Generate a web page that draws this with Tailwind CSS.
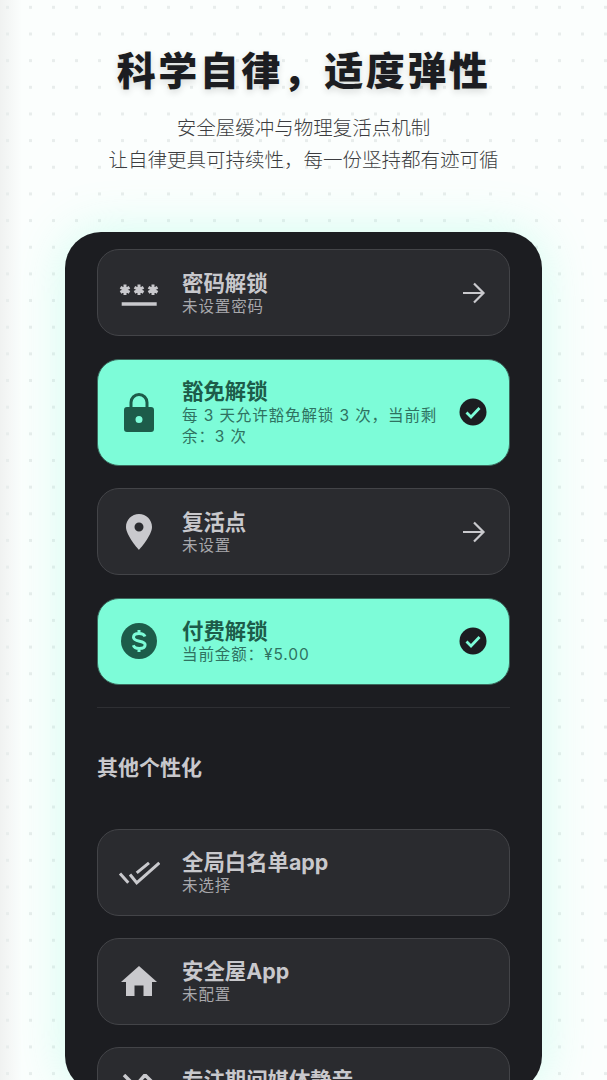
<!DOCTYPE html>
<html lang="zh-CN">
<head>
    <meta charset="UTF-8">
    <meta name="viewport" content="width=device-width, initial-scale=1.0">
    <title>科学自律，适度弹性</title>
    <script src="https://cdn.jsdelivr.net/npm/@tailwindcss/browser@4"></script>
</head>
<body class="h-[1080px] overflow-hidden bg-[linear-gradient(90deg,#f0f2f1,#fbfefd_22px)] font-['Inter','Noto_Sans_CJK_SC',sans-serif]">
    <div class="h-[1080px] overflow-hidden bg-[radial-gradient(circle,#e8edec_1.5px,transparent_2px)] bg-[size:23px_26.67px] bg-[position:-4px_-6px]">
        <header class="pt-[43px] text-center">
            <h1 class="h-[55px] text-[39px] leading-[55px] font-black tracking-[2.5px] text-[#1c1d21] [text-shadow:0_3px_7px_rgba(0,0,0,0.14)]">科学自律，适度弹性</h1>
            <p class="mt-[14px] text-[19.5px] leading-[32px] font-light text-[#3c3d40]">安全屋缓冲与物理复活点机制<br>让自律更具可持续性，每一份坚持都有迹可循</p>
        </header>

        <main class="mx-[65px] mt-[56px] h-[860px] rounded-[36px] bg-[#1c1d21] px-[32px] pt-[17px] shadow-[0_0_50px_rgba(125,252,216,0.32)]">
            <div class="flex flex-col gap-[22.5px]">
                <!-- 密码解锁 -->
                <div class="flex h-[87px] items-center rounded-[22px] border border-[#434448] bg-[#2a2b2f] pr-[22px] pl-[19px]">
                    <div class="flex w-11 flex-none justify-center">
                        <svg class="h-[26px] w-[40px]" viewBox="0 0 40 26" fill="none" stroke="#c9c9cd">
                            <path stroke-width="3" d="M6 4.500v10.500M1.500 7.200l9 5.200M10.500 7.200l-9 5.200M20 4.500v10.500M15.500 7.200l9 5.200M24.500 7.200l-9 5.200M34 4.500v10.500M29.500 7.200l9 5.200M38.500 7.200l-9 5.200"/>
                            <path d="M2.700 24h35" stroke-width="3.600"/>
                        </svg>
                    </div>
                    <div class="ml-[21px] flex-1">
                        <div class="text-[21.4px] leading-[27px] font-bold text-[#c8c8cc]">密码解锁</div>
                        <div class="text-[15.5px] leading-[19px] tracking-[0.9px] text-[#a8a8ac]">未设置密码</div>
                    </div>
                    <svg class="h-7 w-7 flex-none" viewBox="0 0 28 28" fill="none" stroke="#c9c9cd" stroke-width="2.2"><path d="M4 14h20M15 4.500l9.500 9.500-9.500 9.500"/></svg>
                </div>

                <!-- 豁免解锁 -->
                <div class="flex h-[107px] items-center rounded-[22px] border border-[#3b6b5e] bg-[#7dfcd8] pr-[22px] pl-[19px]">
                    <div class="flex w-11 flex-none justify-center">
                        <svg class="h-[39px] w-[30px]" viewBox="0 0 30 39" fill="#1d5c4a">
                            <path fill-rule="evenodd" d="M5.500 14V9.500a9.500 9.500 0 0 1 19 0V14H27a3 3 0 0 1 3 3v19a3 3 0 0 1-3 3H3a3 3 0 0 1-3-3V17a3 3 0 0 1 3-3zM8.500 14h13V9.500a6.500 6.500 0 0 0-13 0zM15 23a3.500 3.500 0 1 0 0 7 3.500 3.500 0 0 0 0-7z"/>
                        </svg>
                    </div>
                    <div class="ml-[21px] flex-1">
                        <div class="text-[21.4px] leading-[27px] font-bold text-[#1d5c4a]">豁免解锁</div>
                        <div class="text-[15.5px] leading-[21px] tracking-[0.9px] text-[#2f7261]">每 3 天允许豁免解锁 3 次，当前剩余：3 次</div>
                    </div>
                    <svg class="ml-[18px] h-7 w-7 flex-none" viewBox="0 0 28 28"><circle cx="14" cy="14" r="13.5" fill="#1c1d21"/><path d="M7.500 14.500l4.500 4.500 8.500-9" fill="none" stroke="#7dfcd8" stroke-width="2.800"/></svg>
                </div>

                <!-- 复活点 -->
                <div class="flex h-[87px] items-center rounded-[22px] border border-[#434448] bg-[#2a2b2f] pr-[22px] pl-[19px]">
                    <div class="flex w-11 flex-none justify-center">
                        <svg class="h-[36px] w-[26px]" viewBox="0 0 26 36" fill="#c9c9cd">
                            <path fill-rule="evenodd" d="M13 0C5.800 0 0 5.800 0 13c0 8.500 13 23 13 23s13-14.500 13-23C26 5.800 20.200 0 13 0zm0 8.500a4.500 4.500 0 1 1 0 9 4.500 4.500 0 0 1 0-9z"/>
                        </svg>
                    </div>
                    <div class="ml-[21px] flex-1">
                        <div class="text-[21.4px] leading-[27px] font-bold text-[#c8c8cc]">复活点</div>
                        <div class="text-[15.5px] leading-[19px] tracking-[0.9px] text-[#a8a8ac]">未设置</div>
                    </div>
                    <svg class="h-7 w-7 flex-none" viewBox="0 0 28 28" fill="none" stroke="#c9c9cd" stroke-width="2.2"><path d="M4 14h20M15 4.500l9.500 9.500-9.500 9.500"/></svg>
                </div>

                <!-- 付费解锁 -->
                <div class="flex h-[87px] items-center rounded-[22px] border border-[#3b6b5e] bg-[#7dfcd8] pr-[22px] pl-[19px]">
                    <div class="flex w-11 flex-none justify-center">
                        <svg class="h-9 w-9" viewBox="0 0 36 36">
                            <circle cx="18" cy="18" r="18" fill="#1d5c4a"/>
                            <path d="M24 13.500c-.8-2-3-3-6-3-3.400 0-5.500 1.500-5.500 3.800 0 5.400 11.600 2.500 11.600 7.500 0 2.400-2.400 3.700-5.800 3.700-3.200 0-5.300-1.200-6-3.200M18 7v3.500M18 25.500V29" fill="none" stroke="#7dfcd8" stroke-width="3"/>
                        </svg>
                    </div>
                    <div class="ml-[21px] flex-1">
                        <div class="text-[21.4px] leading-[27px] font-bold text-[#1d5c4a]">付费解锁</div>
                        <div class="text-[15.5px] leading-[19px] tracking-[0.9px] text-[#2f7261]">当前金额：¥5.00</div>
                    </div>
                    <svg class="h-7 w-7 flex-none" viewBox="0 0 28 28"><circle cx="14" cy="14" r="13.5" fill="#1c1d21"/><path d="M7.500 14.500l4.500 4.500 8.500-9" fill="none" stroke="#7dfcd8" stroke-width="2.800"/></svg>
                </div>
            </div>

            <div class="mt-[22px] h-px bg-[#2e2f33]"></div>
            <h2 class="mt-[46px] text-[21px] leading-[28px] font-bold text-[#c8c8cc]">其他个性化</h2>

            <div class="mt-[47px] flex flex-col gap-[22px]">
                <!-- 全局白名单app -->
                <div class="flex h-[87px] items-center rounded-[22px] border border-[#434448] bg-[#2a2b2f] pr-[22px] pl-[19px]">
                    <div class="flex w-11 flex-none justify-center">
                        <svg class="h-[26px] w-[42px]" viewBox="0 0 42 26" fill="none" stroke="#c9c9cd" stroke-width="3">
                            <path d="M2 14.500l8.300 9.300M12 15.500l6.700 8.300L41.300 3.800M18.700 13.800L31 3.800"/>
                        </svg>
                    </div>
                    <div class="ml-[21px] flex-1">
                        <div class="text-[21.4px] leading-[27px] font-bold text-[#c8c8cc]">全局白名单app</div>
                        <div class="text-[15.5px] leading-[19px] tracking-[0.9px] text-[#a8a8ac]">未选择</div>
                    </div>
                </div>

                <!-- 安全屋App -->
                <div class="flex h-[87px] items-center rounded-[22px] border border-[#434448] bg-[#2a2b2f] pr-[22px] pl-[19px]">
                    <div class="flex w-11 flex-none justify-center">
                        <svg class="h-[30px] w-[36px]" viewBox="0 0 36 30" fill="#c9c9cd">
                            <path d="M18 0L0 16h5v14h8.500V19.500h9V30H31V16h5z"/>
                        </svg>
                    </div>
                    <div class="ml-[21px] flex-1">
                        <div class="text-[21.4px] leading-[27px] font-bold text-[#c8c8cc]">安全屋App</div>
                        <div class="text-[15.5px] leading-[19px] tracking-[0.9px] text-[#a8a8ac]">未配置</div>
                    </div>
                </div>

                <!-- 专注期间媒体静音 -->
                <div class="flex h-[87px] items-center rounded-[22px] border border-[#434448] bg-[#2a2b2f] pr-[22px] pl-[19px]">
                    <div class="flex w-11 flex-none justify-center">
                        <svg class="h-8 w-9" viewBox="0 0 36 32" fill="none" stroke="#c9c9cd" stroke-width="3.500">
                            <path d="M3 1l8 8M17 9l7-8 9 9"/>
                        </svg>
                    </div>
                    <div class="ml-[21px] flex-1">
                        <div class="text-[21.4px] leading-[27px] font-bold text-[#c8c8cc]">专注期间媒体静音</div>
                        <div class="text-[15.5px] leading-[19px] tracking-[0.9px] text-[#a8a8ac]">未开启</div>
                    </div>
                </div>
            </div>
        </main>
    </div>
</body>
</html>
